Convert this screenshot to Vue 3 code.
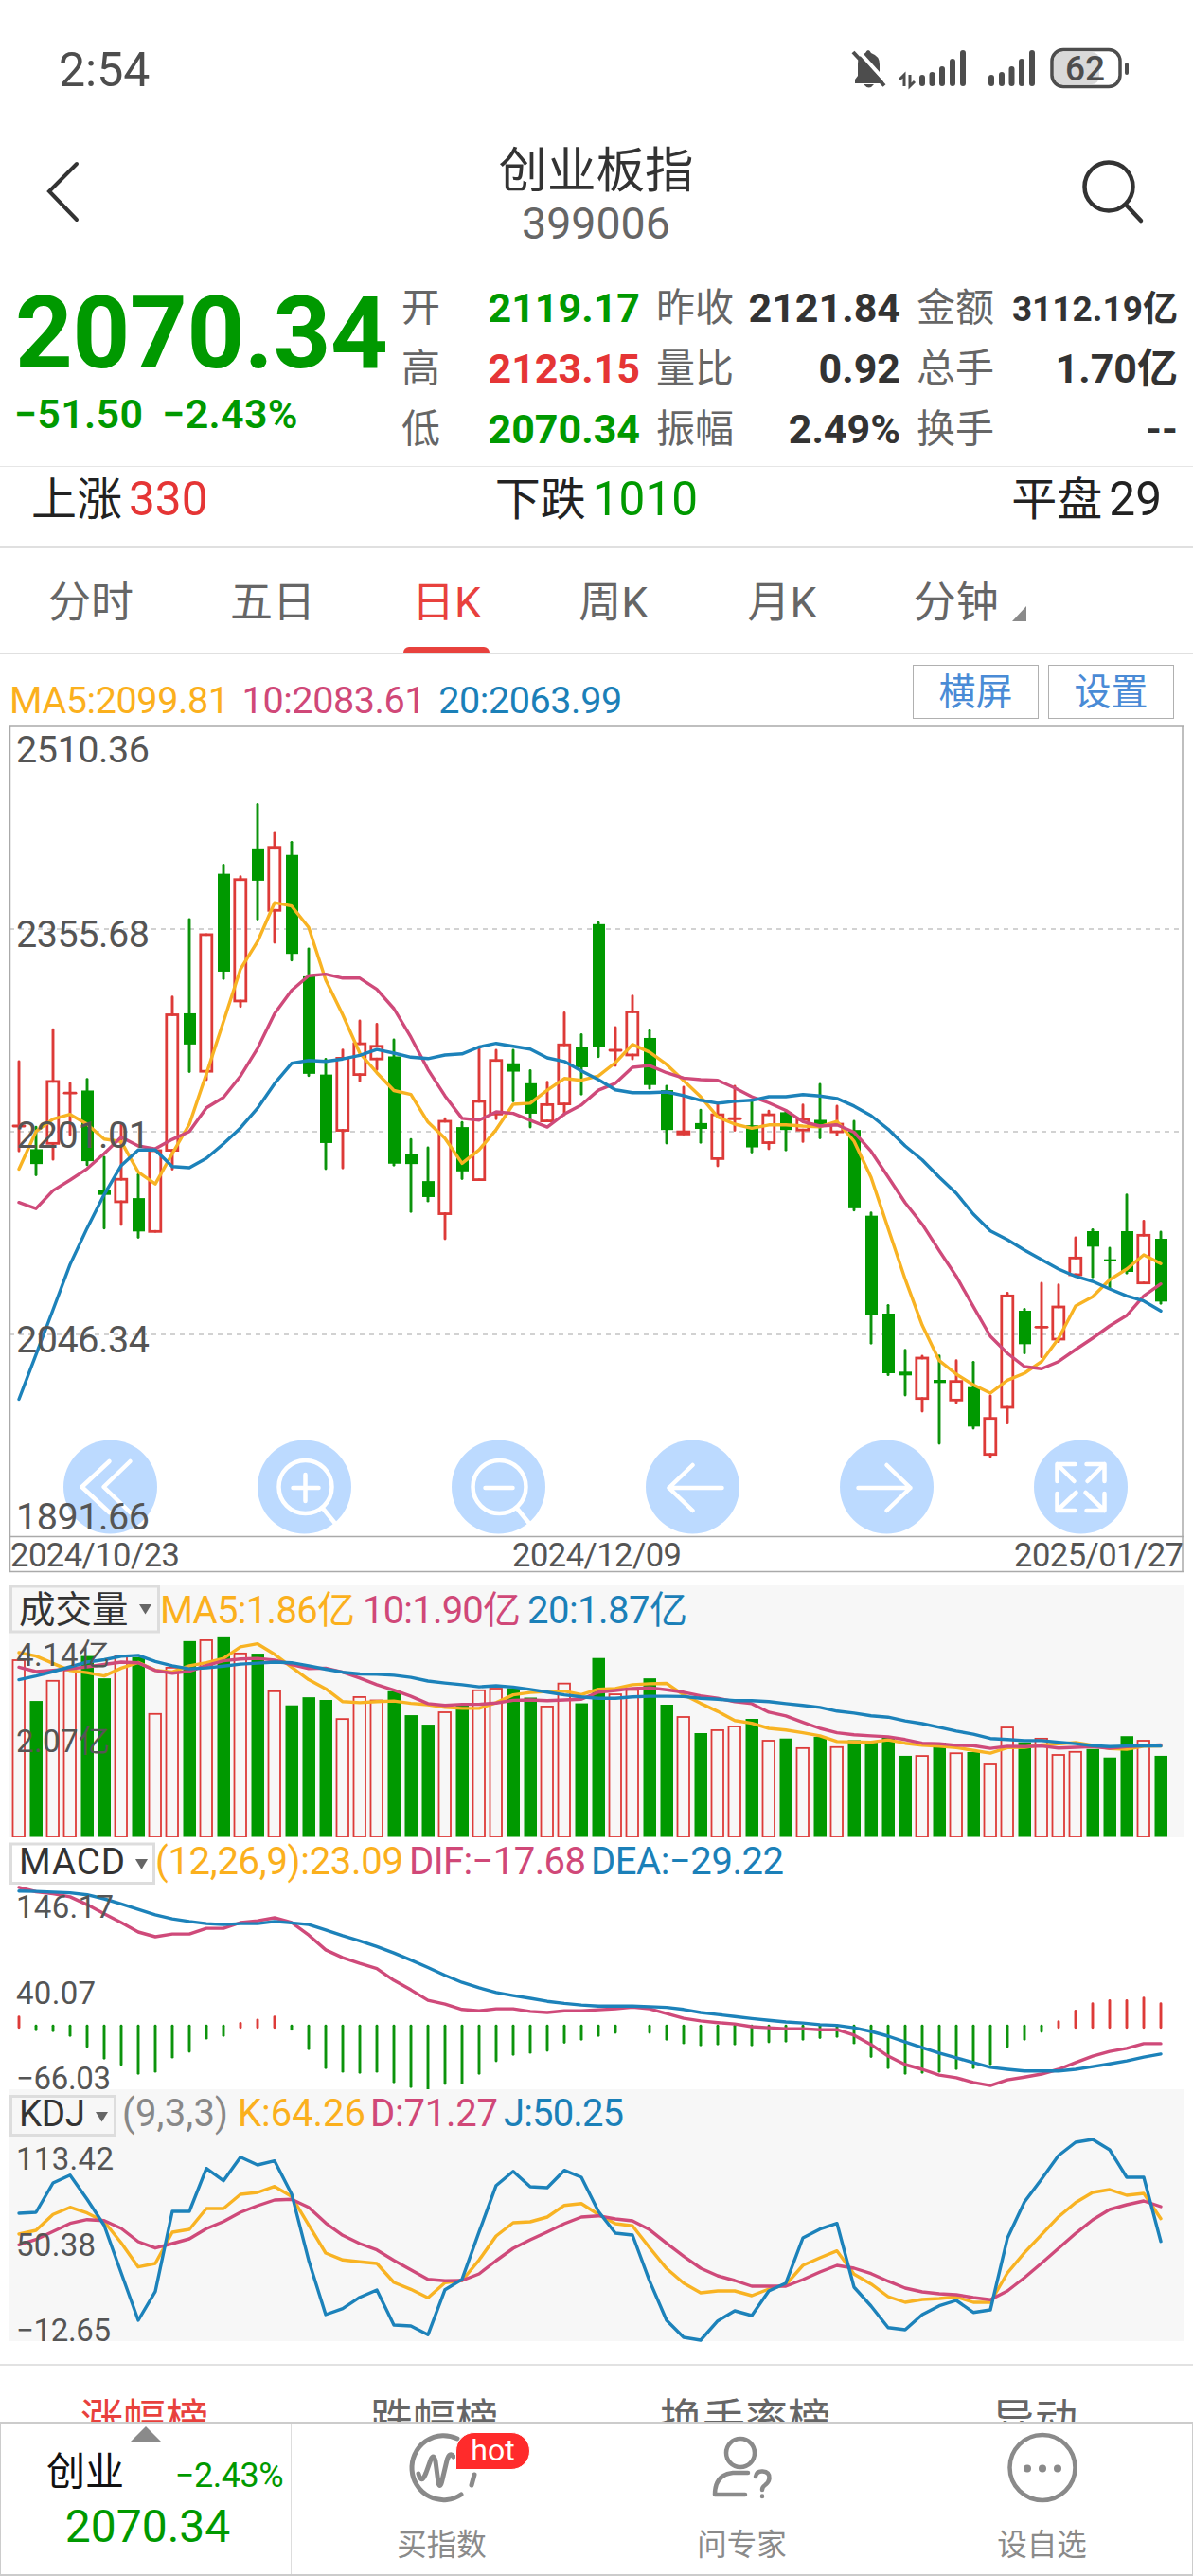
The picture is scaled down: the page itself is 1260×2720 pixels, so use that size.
<script setup>
const STEP = 18
const cx = (i) => 20 + i * STEP
const nums = (s) => s.trim().split(/[\s,]+/).map(Number)

// Samples are packed at two sub-pixel resolutions; both decode to panel pixels.
const fine = (v) => v / 2.6133 - 6
const coarse = (v) => v / 3 + 434
const price = (a, b) => [...nums(a).map(fine), ...nums(b).map(coarse)]
const vol = (v) => v / 2.8 - 14
const macd = (v) => v / 2.8 - 280
const kdj = (v) => v / 3 - 6
const line = (ys) => ys.map((y, i) => `${cx(i)},${y.toFixed(1)}`).join(' ')

const kind = 'RGRRGGRGRRGRGRGRGGGRRRGGGRGRRGGRRGGRRGGRGRRGRGRGRGGGGRGRGRRGRRRGGGRG'

// high, body top, body bottom, low
const ohlc = price(
  `943 1119 1123 1190, 1124 1185 1226 1256, 855 998 1169 1213, 1003 1029 1031 1145, 992 1023 1218 1228,
  1207 1298 1311 1403, 1118 1268 1330 1393, 1255 1320 1412 1428, 1189 1189 1412 1412, 765 814 1188 1240,
  551 810 896 971, 593 593 970 993, 401 425 695 714, 433 441 776 791, 234 355 444 550,
  311 352 526 614, 338 373 646 663, 632 708 977 982, 937 979 1168 1239, 911 934 1133 1237,
  831 894 979 997, 840 901 936 965, 883 929 1225 1229, 1158 1197 1226 1357, 1181 1273 1317 1328,
  1101 1108 1363 1432, 1111 1124 1246 1266, 903 1053 1269 1269, 912 940 1088 1101, 912 948 971 1052,
  968 1003 1087 1124, 1000 1062 1107 1107, 809 897 1060 1090, 869 903 959 1033, 560 564 904 930,
  849 911 913 954, 762 806 925 936, 858 878 1008 1017, 1011 1022 1132 1168, 1014 1137 1143 1143,
  1077 1113 1129 1166, 1058 1090 1211 1231, 1011 1100 1102 1133, 1050 1119 1180 1193, 1080 1090 1167 1184,
  1081 1083 1132 1187, 1063 1103 1132 1164, 1006 1104 1120 1154, 1066 1116 1137 1146, 1108 1132 1348 1353`,
  `242 251 566 655, 535 561 750 755, 677 745 757 819, 696 702 830 870, 695 771 781 972,
  710 776 835 843, 715 794 919 924, 822 893 1007 1014, 496 505 858 908, 547 552 658 686,
  465 603 605 698, 470 540 642 650, 321 385 438 438, 295 300 349 445, 354 389 396 480,
  185 300 429 433, 268 313 464 464, 303 324 523 529`
)
const candles = [...kind].map((k, i) => {
  const [h, t, b, l] = ohlc.slice(i * 4, i * 4 + 4)
  return { x: cx(i), up: k === 'R', flat: b - t < 1.6, h, t, b, l }
})

const ma5 = line(price(
  `1240 1136 1102 1089 1116 1157 1164 1248 1281 1197 1116 977 833 688 612 505 514 573 718 814
  920 974 1023 1034 1110 1155 1224 1187 1131 1061 1058 1022 990 995 983 946 896 917 951 996
  1040 1096 1116 1127 1118 1118 1121 1123 1108 1163`,
  `130 291 452 598 710 753 787 813 772 750 713 640 537 508 454 420 375 403`))
const ma10 = line(price(
  `1332 1349 1299 1270 1239 1197 1152 1176 1184 1158 1136 1071 1042 983 907 811 747 706 702 713
  713 744 797 876 965 1038 1100 1105 1082 1086 1105 1124 1088 1063 1022 1003 959 954 974 989
  993 995 1016 1040 1057 1078 1109 1121 1118 1138`,
  `47 128 210 278 362 443 539 633 687 729 736 713 675 639 600 567 505 467`))
const ma20 = line(price(
  `1875 1752 1628 1503 1403 1310 1230 1187 1187 1233 1236 1210 1170 1126 1072 1004 948 940 943 936
  926 910 920 931 935 925 922 903 893 901 909 933 943 969 993 1021 1029 1029 1027 1037
  1050 1058 1053 1050 1040 1040 1034 1038 1045 1066`,
  `-66 -23 30 74 129 180 246 299 327 360 390 420 443 459 483 505 521 553`))

const volumes = nums(
  `259 381 320 289 248 314 247 252 418 281 204 200 190 239 241 351 394 370 378 433
  368 378 352 423 451 413 390 348 343 343 371 396 328 388 254 360 347 314 392 427
  476 466 455 434 497 492 519 487 516 497 503 489 543 542 504 534 532 567 458 503
  491 539 530 523 548 485 497 543`).map((v, i) => ({ x: cx(i), y: vol(v), up: kind[i] === 'R' }))
const v5 = line(nums(
  `238 248 270 291 297 307 284 267 290 295 277 268 255 221 212 243 281 318 345 383
  386 383 381 388 392 400 403 403 386 363 356 353 352 362 346 344 333 330 329 363
  388 412 439 447 462 467 475 484 501 502 503 496 506 512 515 519 527 535 519 518
  511 508 504 512 522 524 515 514`).map(vol))
const v10 = line(nums(
  `281 294 290 286 280 273 266 268 291 299 293 276 262 257 255 260 273 285 284 296
  313 333 349 367 389 394 391 391 387 379 378 380 378 376 355 350 344 342 348 355
  366 373 383 389 414 425 444 462 475 481 484 487 495 506 507 512 513 521 515 516
  514 520 518 516 521 516 513 511`).map(vol))
const v20 = line(nums(
  `318 307 294 280 266 259 249 246 264 277 286 283 278 272 269 266 268 277 287 296
  301 302 305 311 322 328 333 339 336 340 347 355 363 369 373 373 369 367 367 368
  373 376 380 380 383 389 394 400 411 417 425 429 440 448 459 470 479 492 495 498
  498 503 507 513 516 514 513 514`).map(vol))

const hist = nums(
  `1315 1353 1356 1370 1403 1437 1456 1482 1476 1434 1417 1378 1370 1334 1324 1315 1352 1409 1465 1476
  1479 1476 1507 1521 1532 1512 1510 1482 1445 1426 1420 1414 1390 1381 1370 1361 1344 1361 1381 1392
  1398 1395 1395 1398 1389 1387 1381 1376 1373 1392 1432 1465 1482 1479 1476 1468 1465 1454 1403 1381
  1358 1329 1298 1276 1267 1267 1259 1276`)
  .map((v, i) => ({ x: cx(i), up: v < 1344, base: macd(v < 1344 ? 1346 : 1342), y: macd(v), show: v !== 1344 }))
  .filter((b) => b.show)
const dif = line(nums(
  `932 945 951 960 983 1010 1036 1064 1078 1070 1070 1053 1053 1036 1031 1022 1036 1073 1117 1140
  1157 1172 1207 1235 1266 1277 1293 1297 1291 1291 1299 1302 1297 1297 1294 1291 1286 1291 1305 1319
  1327 1332 1336 1344 1347 1350 1350 1353 1353 1369 1397 1431 1456 1470 1487 1495 1509 1518 1501 1493
  1484 1470 1450 1431 1417 1408 1394 1394`).map(macd))
const dea = line(nums(
  `943 944 946 948 954 966 981 997 1013 1025 1033 1039 1042 1039 1039 1033 1037 1042 1058 1075
  1090 1107 1126 1147 1169 1192 1213 1229 1243 1252 1260 1269 1275 1280 1283 1283 1283 1285 1287 1293
  1302 1308 1314 1320 1325 1330 1333 1338 1340 1347 1358 1372 1389 1406 1422 1436 1450 1464 1470 1475
  1475 1475 1470 1462 1454 1445 1434 1425`).map(macd))

const kLine = line(nums(
  `477 465 415 392 410 437 505 581 570 471 462 396 396 351 345 326 358 448 537 559
  565 570 630 652 679 631 624 559 483 441 438 423 386 380 415 444 451 520 586 632
  663 657 657 672 651 637 576 552 530 604 635 675 693 684 681 676 693 693 600 536
  479 422 377 345 336 354 348 428`).map(kdj))
const dLine = line(nums(
  `511 494 469 443 431 434 459 501 521 507 492 460 437 408 387 369 367 392 442 481
  507 527 560 590 620 625 624 603 561 522 495 470 444 423 419 429 435 463 506 547
  585 609 624 642 642 642 621 597 576 585 602 626 648 660 666 669 678 685 657 615
  569 522 475 432 399 384 372 390`).map(kdj))
const jLine = line(nums(
  `411 408 315 290 367 449 600 750 659 405 405 269 308 233 258 245 350 560 732 713
  677 654 765 768 796 653 620 470 323 278 327 330 275 297 405 474 480 625 750 804
  813 752 720 735 657 632 489 461 443 645 705 773 780 732 704 687 725 717 490 375
  303 228 186 177 210 297 297 500`).map(kdj))

const stats = [
  ['开', '2119.17', 'down'], ['昨收', '2121.84', ''], ['金额', '3112.19亿', 'small'],
  ['高', '2123.15', 'up'], ['量比', '0.92', ''], ['总手', '1.70亿', ''],
  ['低', '2070.34', 'down'], ['振幅', '2.49%', ''], ['换手', '--', ''],
]

const tools = [
  { x: 116.5, d: 'M-1-27L-30 0L-1 27M21-27L-7 0L21 27' },
  { x: 321.5, d: 'M29 0A28 28 0 1 1-27 0A28 28 0 1 1 29 0M19 22L32 38M-12 1H15M1-13V15' },
  { x: 526.5, d: 'M29 0A28 28 0 1 1-27 0A28 28 0 1 1 29 0M19 22L32 38M-14 1H15' },
  { x: 731.5, d: 'M31 1H-25M0-23L-25 1L0 25' },
  { x: 936.5, d: 'M-30 1H25M0-23L25 1L0 25' },
  { x: 1141.5, d: 'M-6-24H-25V-6M-25-24L-7-6M6-24H25V-6M25-24L7-6M-25 7V25H-6M-25 25L-5 6M6 25H25V7M25 25L5 6' },
]
const priceLabels = [
  ['2510.36', 38.5], ['2355.68', 234], ['2201.01', 446], ['2046.34', 662], ['1891.66', 849],
]
</script>

<template>
  <div class="page">
    <header class="status">
      <span class="clock">2:54</span>
      <svg class="sys" width="300" height="50" viewBox="895 48 300 50">
        <g fill="#4d4d4d">
          <path d="M903 88V84L906 80V68Q906 58 914 56Q917 50 920 56Q929 59 929 68V80L933 86V88Z" />
          <path d="M912 89h11q-5 7 -11 0z" />
        </g>
        <path d="M904 51L939 90" stroke="#fff" stroke-width="4" />
        <path d="M901 55L934 90.500" stroke="#4d4d4d" stroke-width="4" />
        <g stroke="#4d4d4d" stroke-width="6" stroke-linecap="round">
          <path d="M974 82V88M984.500 79V88M995 73V88M1006 65V88M1017 56V88" />
          <path d="M1047 82V88M1058 79V88M1068.500 73V88M1079 65V88M1090 56V88" />
        </g>
        <path d="M950 84L955 79V91M966 86L961 91V79" fill="none" stroke="#4d4d4d" stroke-width="3" />
        <rect x="1113" y="55" width="48" height="34" rx="8" fill="#d9d9d9" />
        <rect x="1111" y="52.500" width="72" height="39" rx="12" fill="none" stroke="#4d4d4d" stroke-width="3.500" />
        <path d="M1190 68V77" stroke="#4d4d4d" stroke-width="4" stroke-linecap="round" />
        <text x="1146" y="85" class="bat" text-anchor="middle">62</text>
      </svg>
    </header>

    <nav class="nav">
      <svg width="60" height="80" viewBox="0 0 60 80"><path d="M46 12L17 41L46 71" fill="none" stroke="#333" stroke-width="4" stroke-linecap="round" /></svg>
      <div class="title">
        <div class="name">创业板指</div>
        <div class="code">399006</div>
      </div>
      <svg width="80" height="80" viewBox="0 0 80 80"><g fill="none" stroke="#333" stroke-width="4.500" stroke-linecap="round"><circle cx="36" cy="36" r="25.500" /><path d="M54 55L70 72" /></g></svg>
    </nav>

    <section class="quote">
      <div class="last">
        <div class="big">2070.34</div>
        <div class="chg"><span>−51.50</span><span>−2.43%</span></div>
      </div>
      <div class="grid">
        <div v-for="s in stats" :key="s[0]" class="stat">
          <span class="lab">{{ s[0] }}</span><span class="val" :class="s[2]">{{ s[1] }}</span>
        </div>
      </div>
    </section>

    <section class="breadth">
      <div>上涨<b class="up">330</b></div>
      <div>下跌<b class="down">1010</b></div>
      <div>平盘<b>29</b></div>
    </section>

    <section class="tabs">
      <span>分时</span><span>五日</span><span class="on">日K</span><span>周K</span><span>月K</span>
      <span class="more">分钟<i></i></span>
    </section>

    <section class="mabar">
      <div class="legend"><span class="y">MA5:2099.81</span><span class="p">10:2083.61</span><span class="b">20:2063.99</span></div>
      <div class="btns"><button>横屏</button><button>设置</button></div>
    </section>

    <svg class="chart" width="1260" height="908" viewBox="0 0 1260 908">
      <g stroke="#d2d2d2" stroke-width="2" stroke-dasharray="5 5">
        <path d="M10 215H1249M10 429H1249M10 643H1249" />
      </g>
      <g v-for="t in tools" :key="t.x" :transform="`translate(${t.x} 804)`">
        <circle r="49.500" fill="#bcdaff" />
        <path :d="t.d" fill="none" stroke="#fff" stroke-width="4.500" stroke-linecap="round" stroke-linejoin="round" />
      </g>
      <g v-for="c in candles" :key="c.x">
        <template v-if="c.up">
          <path class="wick up" :d="`M${c.x} ${c.h}V${c.t}M${c.x} ${c.b}V${c.l}`" />
          <path v-if="c.flat" class="wick up" :d="`M${c.x - 6} ${(c.t + c.b) / 2}h12`" />
          <rect v-else class="hollow" :x="c.x - 6.200" :y="c.t" width="12" :height="c.b - c.t" />
        </template>
        <template v-else>
          <path class="wick down" :d="`M${c.x} ${c.h}V${c.l}`" />
          <rect fill="#009900" :x="c.x - 6" :y="c.t" width="13" :height="c.b - c.t" />
        </template>
      </g>
      <polyline class="ln y" :points="ma5" />
      <polyline class="ln p" :points="ma10" />
      <polyline class="ln b" :points="ma20" />
      <path d="M10.500 1V893.500M1249 1V893.500M10 1H1250M10 856.500H1250M10 893.500H1250" fill="none" stroke="#aaa" stroke-width="1.500" />
      <text v-for="l in priceLabels" :key="l[0]" class="axis" x="17" :y="l[1]" textLength="141">{{ l[0] }}</text>
      <g class="date">
        <text x="11" y="888" textLength="179">2024/10/23</text>
        <text x="541" y="888" textLength="179">2024/12/09</text>
        <text x="1071" y="888" textLength="179">2025/01/27</text>
      </g>
    </svg>

    <svg class="panel" width="1260" height="266" viewBox="0 0 1260 266">
      <rect x="10" width="1240" height="266" fill="#f7f7f7" />
      <g v-for="v in volumes" :key="v.x">
        <rect v-if="v.up" class="hollow thin" :x="v.x - 6.500" :y="v.y + 0.500" width="12.500" :height="265.500 - v.y" />
        <rect v-else fill="#009900" :x="v.x - 6.500" :y="v.y" width="13.500" :height="265.500 - v.y" />
      </g>
      <polyline class="ln y" :points="v5" />
      <polyline class="ln p" :points="v10" />
      <polyline class="ln b" :points="v20" />
      <rect x="11.500" y="1" width="156" height="48" fill="#f7f7f7" stroke="#ddd" stroke-width="3" />
      <text class="pick" x="20" y="38.500">成交量</text>
      <path d="M147 20h13l-6.500 10.500z" fill="#666" />
      <g class="leg">
        <text class="y" x="169" y="39.500" textLength="206">MA5:1.86亿</text>
        <text class="p" x="383" y="39.500" textLength="167">10:1.90亿</text>
        <text class="b" x="557" y="39.500" textLength="169">20:1.87亿</text>
      </g>
      <g class="sub">
        <text x="17" y="85" textLength="99">4.14亿</text>
        <text x="17" y="176" textLength="99">2.07亿</text>
      </g>
    </svg>

    <svg class="panel" width="1260" height="266" viewBox="0 0 1260 266">
      <path v-for="h in hist" :key="h.x" class="wick" :class="h.up ? 'up' : 'down'" :d="`M${h.x} ${h.base}V${h.y}`" />
      <polyline class="ln p" :points="dif" />
      <polyline class="ln b" :points="dea" />
      <rect x="11.500" y="7" width="151" height="41.500" fill="#fff" stroke="#ddd" stroke-width="3" />
      <text class="pick" x="20" y="38.500" textLength="112">MACD</text>
      <path d="M143 23h13l-6.500 11z" fill="#666" />
      <g class="leg">
        <text class="y" x="164" y="38.500" textLength="262">(12,26,9):23.09</text>
        <text class="p" x="432" y="38.500" textLength="187">DIF:−17.68</text>
        <text class="b" x="624" y="38.500" textLength="204">DEA:−29.22</text>
      </g>
      <g class="sub">
        <text x="17" y="84.500" textLength="103">146.17</text>
        <text x="17" y="176" textLength="84">40.07</text>
        <text x="17" y="265.500" textLength="100">−66.03</text>
      </g>
    </svg>

    <svg class="panel" width="1260" height="290" viewBox="0 0 1260 290">
      <rect x="10" width="1240" height="266" fill="#f7f7f7" />
      <polyline class="ln y" :points="kLine" />
      <polyline class="ln p" :points="dLine" />
      <polyline class="ln b" :points="jLine" />
      <rect x="11.500" y="7.500" width="110" height="41" fill="#f7f7f7" stroke="#ddd" stroke-width="3" />
      <text class="pick" x="20" y="38.500" textLength="70">KDJ</text>
      <path d="M101 24h13l-6.500 10.500z" fill="#666" />
      <g class="leg">
        <text fill="#888" x="129" y="38.500" textLength="112">(9,3,3)</text>
        <text class="y" x="251" y="38.500" textLength="135">K:64.26</text>
        <text class="p" x="391" y="38.500" textLength="135">D:71.27</text>
        <text class="b" x="532" y="38.500" textLength="127">J:50.25</text>
      </g>
      <g class="sub">
        <text x="17" y="84.500" textLength="103">113.42</text>
        <text x="17" y="175.500" textLength="84">50.38</text>
        <text x="17" y="266" textLength="100">−12.65</text>
      </g>
    </svg>

    <section class="rank"><span class="up">涨幅榜</span><span>跌幅榜</span><span>换手率榜</span><span>异动</span></section>

    <footer class="dock">
      <div class="mini">
        <i class="tri"></i>
        <div class="row"><span>创业</span><em>−2.43%</em></div>
        <div class="px">2070.34</div>
      </div>
      <div class="item">
        <svg width="110" height="90" viewBox="411 2562 110 90">
          <g fill="none" stroke="#8a8a8a" stroke-width="5" stroke-linecap="round" stroke-linejoin="round">
            <path d="M482 2575A33.500 34 0 1 0 486 2634" />
            <path d="M441 2612Q444 2624 449 2611L454 2597Q457 2590 459 2599L462 2622Q464 2628 466 2619L471 2598Q474 2588 478 2594M500 2613L497 2624" />
          </g>
        </svg>
        <span class="hot">hot</span>
        <span>买指数</span>
      </div>
      <div class="item">
        <svg width="110" height="90" viewBox="729 2562 110 90">
          <g fill="none" stroke="#8a8a8a" stroke-width="4.500" stroke-linecap="round" stroke-linejoin="round">
            <circle cx="782" cy="2590" r="15" />
            <path d="M790 2611H774Q755 2613 755 2634H787" />
            <path d="M798 2615Q799 2609 805.500 2609.500Q813 2610 812.500 2617Q812 2621 808 2624Q805 2626 805 2629M805 2635.500V2636" />
          </g>
        </svg>
        <span>问专家</span>
      </div>
      <div class="item">
        <svg width="110" height="90" viewBox="1046 2562 110 90">
          <circle cx="1101" cy="2605.500" r="34.500" fill="none" stroke="#8a8a8a" stroke-width="4.500" />
          <g fill="#8a8a8a"><circle cx="1085" cy="2606.500" r="4" /><circle cx="1101" cy="2606.500" r="4" /><circle cx="1117" cy="2606.500" r="4" /></g>
        </svg>
        <span>设自选</span>
      </div>
    </footer>
  </div>
</template>

<style>
body { background: #fff; }
</style>

<style scoped>
.page { width: 1260px; height: 2720px; overflow: hidden; background: #fff; color: #333; font-family: Roboto, "Noto Sans CJK SC", sans-serif; }
.page * { box-sizing: border-box; }
svg { display: block; flex: none; }
b, em, i { font-weight: 400; font-style: normal; }
.up { color: #e53535; }
.down { color: #009900; }

.status { height: 146px; padding: 0 65px 0 62px; display: flex; justify-content: space-between; align-items: center; }
.clock { font-size: 50px; line-height: 60px; color: #4d4d4d; padding-top: 1px; }
.bat { font: 500 37px Roboto, sans-serif; fill: #4d4d4d; }

.nav { height: 144px; padding: 0 35px 0 35px; display: flex; justify-content: space-between; align-items: flex-start; }
.nav > svg:first-child { margin-top: 15px; }
.nav > svg:last-child { margin: 15px 10px 0 0; }
.title { text-align: center; margin-left: 29px; }
.name { font-size: 51.500px; line-height: 60px; margin-top: 5px; }
.code { font-size: 46.500px; line-height: 52px; color: #666; margin-top: -1px; }

.quote { height: 202px; display: flex; padding: 3px 15px 0 16px; }
.last { width: 408px; }
.big { font-size: 106px; line-height: 106px; font-weight: 700; color: #009900; margin-top: 6px; letter-spacing: -0.300px; }
.chg { display: flex; gap: 20px; font-size: 43px; line-height: 64px; font-weight: 600; color: #009900; letter-spacing: 0.300px; margin-left: -1px; }
.grid { flex: 1; display: grid; grid-template-columns: 252px 258px 276px; column-gap: 17px; grid-auto-rows: 64px; }
.stat { display: flex; justify-content: space-between; line-height: 64px; white-space: nowrap; }
.lab { font-size: 41px; color: #666; }
.val { font-size: 43px; font-weight: 700; }
.val.small { font-size: 37px; line-height: 68px; }

.breadth { height: 85px; border-top: 1.500px solid #e6e6e6; padding: 0 33px; display: flex; justify-content: space-between; font-size: 48px; line-height: 69px; color: #222; }
.breadth b { margin-left: 7px; font-size: 49.500px; }
.breadth div:nth-child(2) { margin-right: 28px; }

.tabs { height: 114px; border-top: 2px solid #e0e0e0; border-bottom: 2px solid #e0e0e0; display: flex; padding-left: 51px; font-size: 45px; line-height: 116px; color: #666; }
.tabs span { margin-right: 102px; position: relative; white-space: nowrap; }
.tabs span:nth-child(3) { margin-right: 103px; }
.tabs span:nth-child(4) { margin-right: 105px; }
.tabs .on { color: #e8413d; }
.tabs .on::after { content: ""; position: absolute; left: -9px; bottom: 0; width: 91px; height: 6px; border-radius: 6px 6px 0 0; background: #e8413d; }
.more i { position: absolute; left: 104px; top: 61px; border-left: 15px solid transparent; border-bottom: 16px solid #8a8a8a; }

.mabar { height: 75px; display: flex; justify-content: space-between; padding: 11px 20px 0 10px; }
.legend { display: flex; gap: 14px; font-size: 39.500px; line-height: 75px; letter-spacing: -0.400px; }
.legend .y { color: #fbb01d; }
.legend .p { color: #d04878; }
.legend .b { color: #1b80b8; }
.btns { display: flex; gap: 10px; }
.btns button { width: 133px; height: 57px; padding: 0; border: 1.500px solid #b0b0b0; background: #fff; color: #4a8bd6; font: 39px/52px Roboto, "Noto Sans CJK SC", sans-serif; }

.wick { fill: none; stroke-width: 2.900; stroke-linecap: round; }
.wick.up { stroke: #dd3a38; }
.wick.down { stroke: #0c930c; }
.hollow { fill: none; stroke: #dd3a38; stroke-width: 2.800; }
.hollow.thin { stroke-width: 1.800; }
.ln { fill: none; stroke-width: 3.400; stroke-linejoin: round; stroke-linecap: round; }
.ln.y { stroke: #f8b323; }
.ln.p { stroke: #cf4a7a; }
.ln.b { stroke: #1c82ba; }
text.y { fill: #fbb01d; }
text.p { fill: #d04878; }
text.b { fill: #1b80b8; }
.axis { font-size: 39.500px; fill: #555; }
.date { font-size: 34.500px; fill: #555; }
.sub { font-size: 33px; fill: #555; }
.leg { font-size: 40px; }
.pick { font-size: 38.500px; fill: #333; }

.rank { height: 61px; border-top: 2px solid #e2e2e2; padding-left: 85px; display: flex; gap: 171px; font-size: 45px; line-height: 116px; color: #666; overflow: hidden; white-space: nowrap; }
.rank .up { color: #e8413d; }

.dock { height: 163px; position: relative; background: #fff; border: 2px solid #ccc; border-left-width: 1px; border-right-width: 1px; display: flex; color: #8a8a8a; font-size: 31.500px; }
.mini { width: 307px; border-right: 1px solid #ddd; display: flex; flex-direction: column; }
.tri { align-self: center; margin: 3px 0 0 0; border: 16px solid transparent; border-top: 0; border-bottom: 16px solid #8a8a8a; }
.row { display: flex; justify-content: space-between; padding: 0 8px 0 48px; margin-top: 7px; font-size: 41px; line-height: 50px; color: #111; }
.row em { font-size: 36px; line-height: 58px; color: #009900; letter-spacing: -0.500px; }
.px { font-size: 48px; line-height: 60px; text-align: center; margin-top: -5px; color: #009900; padding-left: 4px; }
.item { flex: 1; display: flex; flex-direction: column; align-items: center; position: relative; }
.item > svg { margin-top: 3px; }
.item > span:last-child { line-height: 40px; margin-top: 16px; }
.hot { position: absolute; left: 173px; top: 9px; width: 79px; height: 40px; border: 1px solid #fff; border-radius: 20px 20px 20px 0; background: #ff2b2b; color: #fff; font-size: 32px; line-height: 37px; text-align: center; }
</style>
